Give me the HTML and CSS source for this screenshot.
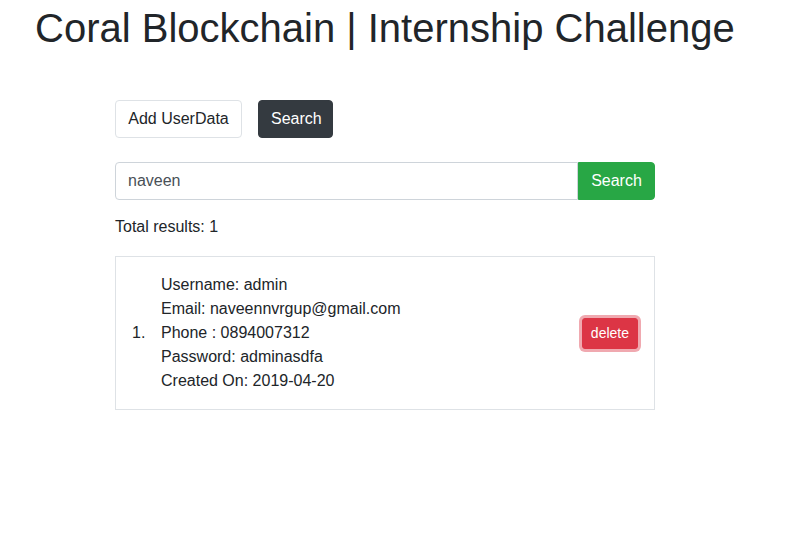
FILE: index.html
```html
<!DOCTYPE html>
<html>
<head>
<meta charset="utf-8">
<link rel="stylesheet" href="styles.css">
</head>
<body>
<h1 class="title">Coral Blockchain | Internship Challenge</h1>
<main class="main">
  <div class="actions">
    <button class="btn btn-light">Add UserData</button>
    <button class="btn btn-dark">Search</button>
  </div>
  <div class="input-group">
    <input class="form-control" type="text" value="naveen">
    <button class="btn btn-success">Search</button>
  </div>
  <p class="total">Total results: 1</p>
  <div class="card">
    <span class="num">1.</span>
    <div class="details">
      <div>Username: admin</div>
      <div>Email: naveennvrgup@gmail.com</div>
      <div>Phone : 0894007312</div>
      <div>Password: adminasdfa</div>
      <div>Created On: 2019-04-20</div>
    </div>
    <button class="btn btn-danger btn-sm">delete</button>
  </div>
</main>
</body>
</html>
```
FILE: styles.css
```css
* { box-sizing: border-box; }
body {
  margin: 0;
  font-family: "Liberation Sans", Arial, sans-serif;
  font-size: 16px;
  line-height: 1.5;
  color: #212529;
  background: #fff;
}
.title {
  margin: 0;
  padding: 4px 0 0 35px;
  font-size: 40px;
  font-weight: 400;
  line-height: 1.2;
}
.main {
  margin: 48px 0 0 115px;
  width: 540px;
}
.actions {
  display: flex;
  gap: 16px;
}
.btn {
  font-family: inherit;
  font-size: 16px;
  line-height: 1.5;
  padding: 6px 12px;
  border: 1px solid transparent;
  border-radius: 4px;
  cursor: pointer;
}
.btn-light {
  background: #fff;
  border-color: #dee2e6;
  color: #212529;
  width: 127px;
}
.btn-dark {
  background: #343a40;
  border-color: #343a40;
  color: #fff;
  width: 75px;
}
.input-group {
  display: flex;
  margin-top: 24px;
}
.form-control {
  flex: 1;
  height: 38px;
  padding: 6px 12px;
  font-family: inherit;
  font-size: 16px;
  color: #495057;
  border: 1px solid #ced4da;
  border-radius: 4px 0 0 4px;
  outline: none;
}
.btn-success {
  background: #28a745;
  border-color: #28a745;
  color: #fff;
  border-radius: 0 4px 4px 0;
  width: 77px;
}
.total {
  margin: 15px 0 17px;
}
.card {
  display: flex;
  align-items: center;
  border: 1px solid #dee2e6;
  padding: 16px;
}
.num {
  width: 29px;
}
.details {
  flex: 1;
}
.btn-danger {
  background: #dc3545;
  border-color: #dc3545;
  color: #fff;
  box-shadow: 0 0 0 3px rgba(225, 83, 97, 0.5);
}
.btn-sm {
  font-size: 14px;
  padding: 4px 8px;
  line-height: 1.5;
  border-radius: 3px;
}
```
